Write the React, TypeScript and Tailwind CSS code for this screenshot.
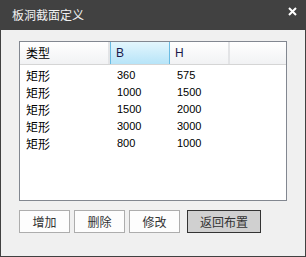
const rows = [
  { type: "矩形", b: "360", h: "575" },
  { type: "矩形", b: "1000", h: "1500" },
  { type: "矩形", b: "1500", h: "2000" },
  { type: "矩形", b: "3000", h: "3000" },
  { type: "矩形", b: "800", h: "1000" },
];

const cjk = "font-['Microsoft_YaHei','Noto_Sans_CJK_SC',sans-serif]";
const num = "font-['Liberation_Sans',sans-serif]";

export default function App() {
  return (
    <div className="flex h-[257px] w-[306px] flex-col bg-[#414141]">
      {/* title bar */}
      <div className="relative flex h-[30px] items-center pl-[12px]">
        <span className={`${cjk} text-[12px] text-[#f2f2f2]`}>板洞截面定义</span>
        <svg
          className="absolute right-[9px] top-[7px]"
          width="9"
          height="9"
          viewBox="0 0 9 9"
          aria-hidden="true"
        >
          <path d="M1 1 L8 8 M8 1 L1 8" stroke="#ffffff" strokeWidth="2" />
        </svg>
      </div>

      <div className="mx-[1px] mb-[1px] flex flex-1 flex-col bg-[#f0f0f0] pl-[18px] pt-[11px]">
        {/* list */}
        <div className="h-[160px] w-[268px] border border-[#828790] bg-white">
          <div className="flex h-[23px] border-b border-[#d5d5d5] bg-gradient-to-b from-white to-[#f1f2f4] text-[12px] text-black">
            <div className={`${cjk} flex w-[90px] items-center border-r-2 border-[#e3e4e6] pl-[6px]`}>类型</div>
            <div className={`${num} flex w-[60px] items-center border-x border-[#69bbe3] bg-gradient-to-b from-[#e3f6fd] to-[#b7e4f8] pl-[5px] text-[12px] text-[#1a1a4a]`}>
              B
            </div>
            <div className={`${num} flex w-[60px] items-center border-r-2 border-[#e3e4e6] pl-[5px] text-[12px] text-[#1a1a4a]`}>
              H
            </div>
            <div className="flex-1" />
          </div>
          <div className="pt-[2px]">
            {rows.map((r, i) => (
              <div key={i} className="flex h-[17px] items-center text-black">
                <div className={`${cjk} w-[91px] pl-[6px] text-[12px]`}>{r.type}</div>
                <div className={`${num} w-[60px] pl-[6px] text-[11px]`}>{r.b}</div>
                <div className={`${num} w-[60px] pl-[6px] text-[11px]`}>{r.h}</div>
              </div>
            ))}
          </div>
        </div>

        {/* buttons */}
        <div className={`${cjk} mt-[9px] flex text-[12px] text-[#333]`}>
          <button className="h-[23px] w-[51px] border border-[#adadad] bg-[#fdfdfd]">增加</button>
          <button className="ml-[4px] h-[23px] w-[51px] border border-[#adadad] bg-[#fdfdfd]">删除</button>
          <button className="ml-[4px] h-[23px] w-[51px] border border-[#adadad] bg-[#fdfdfd]">修改</button>
          <button className="ml-[7px] h-[23px] w-[74px] border border-[#333333] bg-[#d0d0d0]">返回布置</button>
        </div>
      </div>
    </div>
  );
}
